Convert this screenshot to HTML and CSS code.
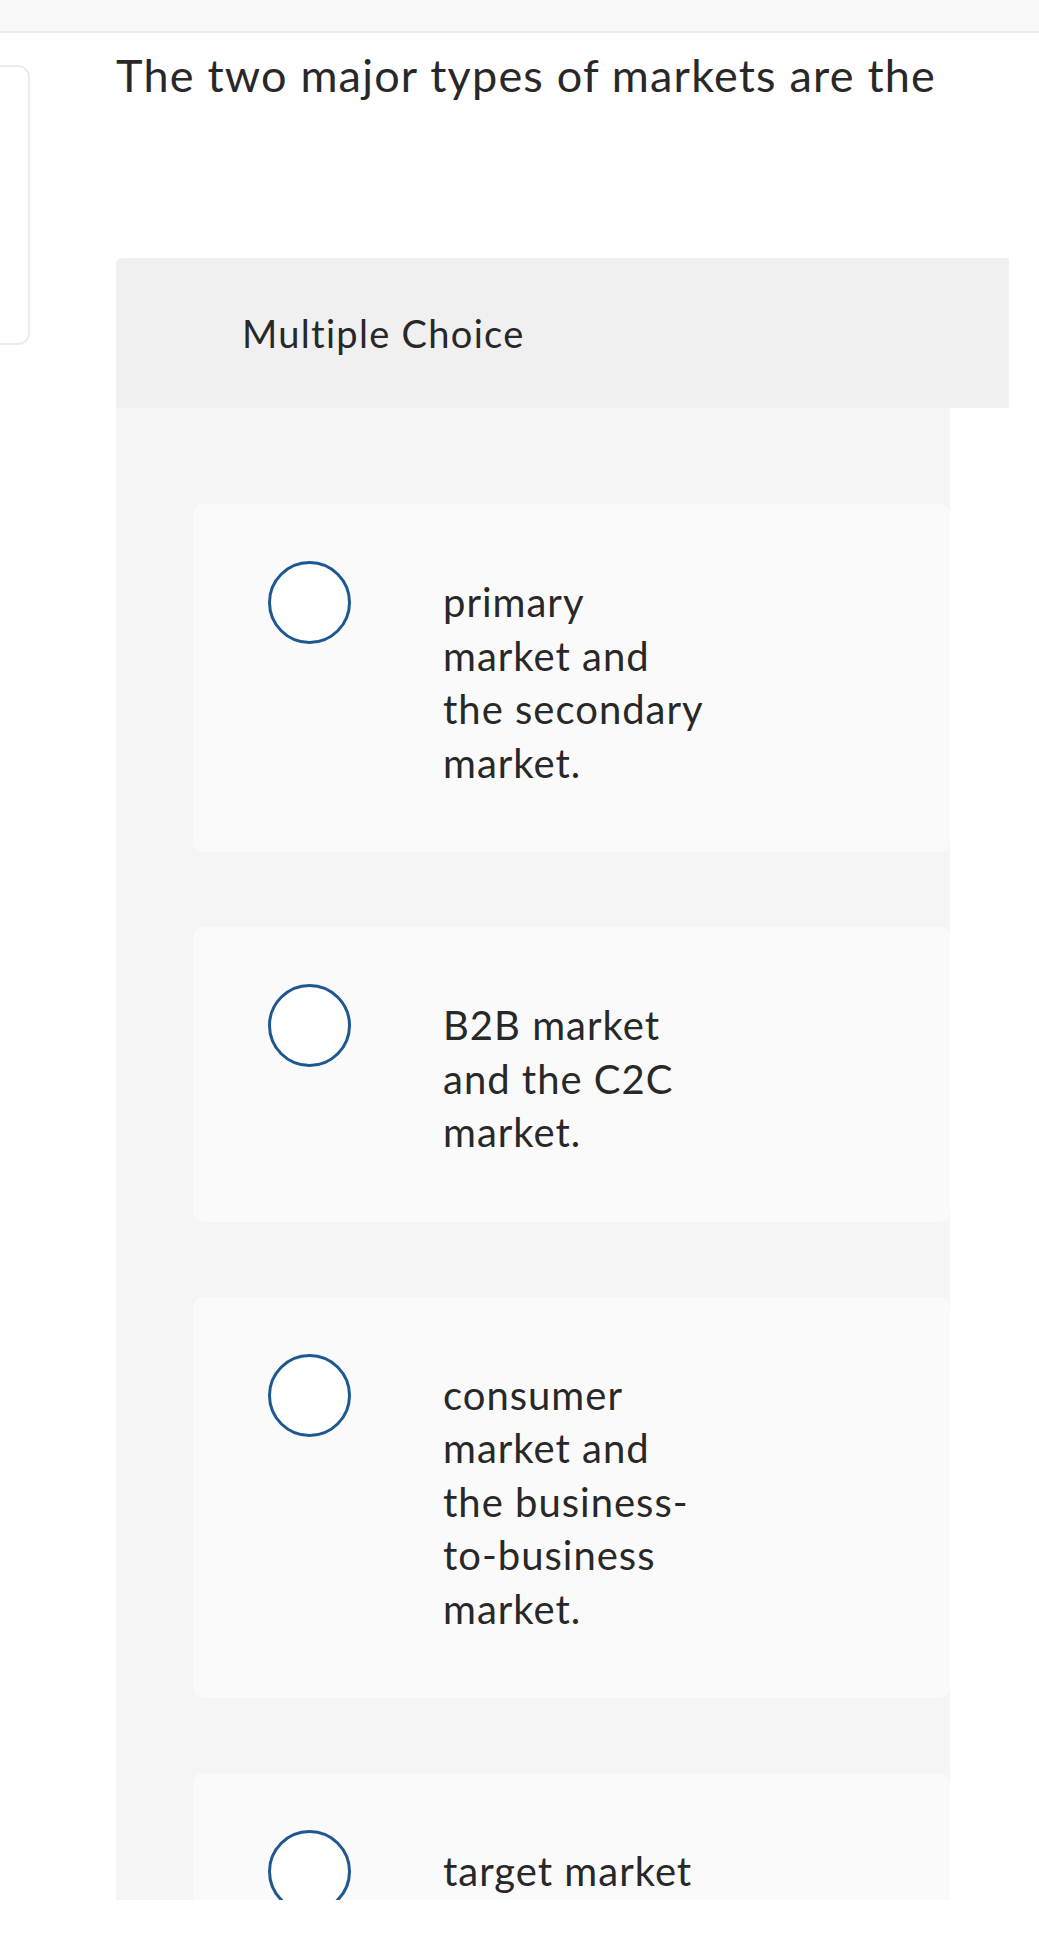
FILE: index.html
```html
<!DOCTYPE html>
<html lang="en">
<head>
  <meta charset="UTF-8" />
  <meta name="viewport" content="width=device-width, initial-scale=1.0"/>
  <title>Question</title>
  <link rel="stylesheet" href="styles.css">
</head>
<body>

  <div class="topbar"></div>

  <div class="page">
    <!-- side panel, mostly scrolled off to the left -->
    <aside class="side-card"></aside>

    <main class="question">
      <p class="prompt">The two major types of markets are the</p>

      <section class="mc">
        <div class="mc-head">Multiple Choice</div>

        <div class="mc-body">
          <label class="choice">
            <span class="radio"></span>
            <span class="choice-text">primary market and the secondary market.</span>
          </label>

          <label class="choice">
            <span class="radio"></span>
            <span class="choice-text">B2B market and the C2C market.</span>
          </label>

          <label class="choice">
            <span class="radio"></span>
            <span class="choice-text">consumer market and the business-to-business market.</span>
          </label>

          <label class="choice">
            <span class="radio"></span>
            <span class="choice-text">target market</span>
          </label>
        </div>
      </section>
    </main>
  </div>

</body>
</html>
```

FILE: styles.css
```css
* { box-sizing: border-box; margin: 0; padding: 0; }

body {
  background: #ffffff;
  font-family: "Lato", "Noto Sans", sans-serif;
  font-variant-ligatures: none;
  color: #282828;
  overflow: hidden;
}

.topbar {
  height: 33px;
  background: #f9f9f9;
  border-bottom: 2px solid #ebebeb;
}

.page {
  display: flex;
  align-items: flex-start;
}

.side-card {
  flex: none;
  width: 60px;
  height: 280px;
  margin-left: -30px;
  margin-top: 32px;
  border: 2px solid #ececec;
  border-radius: 12px;
  background: #ffffff;
}

.question {
  flex: none;
  width: 893px;
  margin-left: 86px;
}

.prompt {
  font-size: 45px;
  line-height: 56px;
  letter-spacing: 1.2px;
  margin-top: 14px;
  height: 211px;
}

/* Multiple choice block */
.mc-head {
  height: 150px;
  display: flex;
  align-items: center;
  padding-left: 126px;
  background: #f0f0f0;
  border-radius: 6px 0 0 0;
  font-size: 38px;
  letter-spacing: 1.3px;
}

.mc-body {
  width: 834px;
  height: 1492px;
  overflow: hidden;
  background: #f5f5f5;
  padding: 96px 0 0 77px;
  display: flex;
  flex-direction: column;
  gap: 75px;
}

.choice {
  flex: none;
  display: flex;
  align-items: flex-start;
  padding: 57px 0 62px 75px;
  background: #fafafa;
  border-radius: 10px;
  cursor: pointer;
}

.radio {
  flex: none;
  width: 83px;
  height: 83px;
  border: 3px solid #1d5891;
  border-radius: 50%;
  background: #ffffff;
}

.choice-text {
  width: 268px;
  margin-left: 92px;
  margin-top: 15px;
  font-size: 40px;
  line-height: 53.5px;
  letter-spacing: 1px;
}
```
